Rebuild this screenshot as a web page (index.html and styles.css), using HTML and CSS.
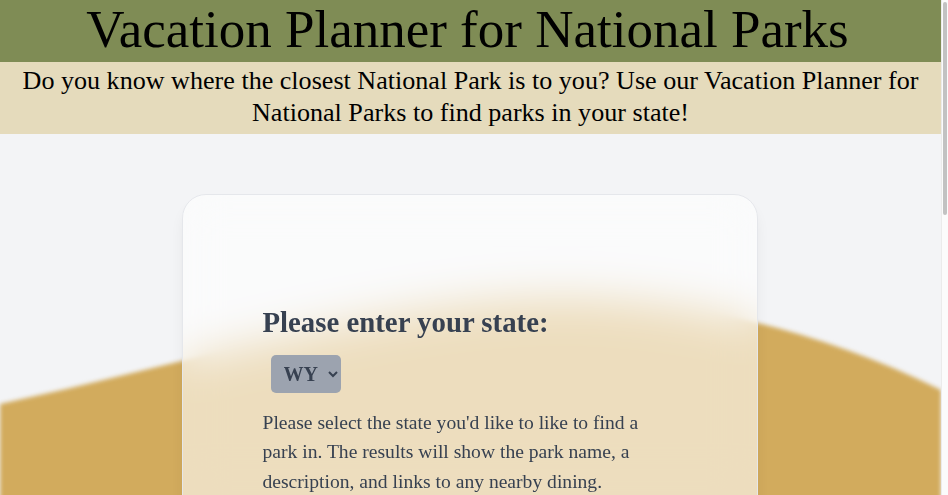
FILE: index.html
```html
<!DOCTYPE html>
<html lang="en">
<head>
<meta charset="utf-8">
<title>Vacation Planner for National Parks</title>
<link rel="stylesheet" href="styles.css">
</head>
<body>
<header class="site-header">
  <h1 class="site-title">Vacation Planner for National Parks</h1>
</header>
<section class="intro">
  <p class="intro-text">Do you know where the closest National Park is to you? Use our Vacation Planner for National Parks to find parks in your state!</p>
</section>
<main class="main">
  <svg class="hill" viewBox="0 0 941 700" preserveAspectRatio="none" aria-hidden="true">
    <path d="M0,270 C200,226 400,164 560,164 C660,164 800,186 941,256 L941,700 L0,700 Z" fill="#d2ab5d"/>
  </svg>
  <div class="card">
    <form class="state-form">
      <label class="form-title" for="state">Please enter your state:</label>
      <select class="state-select" id="state" name="state">
        <option>WY</option>
      </select>
      <p class="form-help">Please select the state you'd like to like to find a park in. The results will show the park name, a description, and links to any nearby dining.</p>
    </form>
  </div>
</main>
<div class="scrollbar" aria-hidden="true"><div class="scrollbar-thumb"></div></div>
</body>
</html>
```
FILE: styles.css
```css
html, body {
  margin: 0;
  padding: 0;
}
body {
  background: #f3f4f6;
  font-family: "Liberation Serif", "Times New Roman", serif;
  color: #000;
  margin-right: 7px;
}
.site-header {
  background: #7f8c55;
  height: 62px;
  text-align: center;
}
.site-title {
  margin: 0;
  font-size: 53px;
  font-weight: normal;
  line-height: 58px;
  transform: translateX(-3px);
}
.intro {
  background: #e5dbbc;
  padding: 3px 12px 5px;
  text-align: center;
}
.intro-text {
  margin: 0;
  font-size: 26.1px;
  line-height: 32px;
}
.main {
  position: relative;
  padding: 60px 0 80px;
  overflow: hidden;
}
.hill {
  position: absolute;
  left: 0;
  top: 0;
  width: 100%;
  height: 700px;
  filter: blur(2px);
  z-index: 0;
}
.card {
  position: relative;
  z-index: 1;
  width: 576px;
  box-sizing: border-box;
  margin: 0 auto;
  padding: 109px 80px 140px;
  border: 1px solid #e5e7eb;
  border-radius: 24px;
  background: rgba(255, 255, 255, 0.6);
  backdrop-filter: blur(22px);
  box-shadow: 0 10px 15px -3px rgba(0, 0, 0, 0.08), 0 4px 6px -4px rgba(0, 0, 0, 0.08);
  color: #374151;
  left: -1px;
}
.state-form {
  display: flex;
  flex-direction: column;
  align-items: flex-start;
}
.form-title {
  font-size: 28.8px;
  font-weight: bold;
  line-height: 36px;
}
.state-select {
  margin: 15px 0 0 8px;
  width: 70px;
  height: 38px;
  padding: 0 2px 0 9px;
  border: none;
  border-radius: 5px;
  background-color: #9ca3af;
  color: #374151;
  font-family: "Liberation Serif", "Times New Roman", serif;
  font-size: 20px;
  font-weight: bold;
}
.form-help {
  margin: 15px 0 0;
  max-width: 392px;
  font-size: 19.6px;
  line-height: 29.25px;
}
.scrollbar {
  position: fixed;
  top: 0;
  right: 0;
  width: 7px;
  height: 100%;
  background: #fbfbfb;
  border-left: 1px solid #ebebeb;
  box-sizing: border-box;
}
.scrollbar-thumb {
  position: absolute;
  top: 2px;
  right: 1px;
  width: 4px;
  height: 213px;
  border-radius: 2px;
  background: #c2c2c2;
}
```
